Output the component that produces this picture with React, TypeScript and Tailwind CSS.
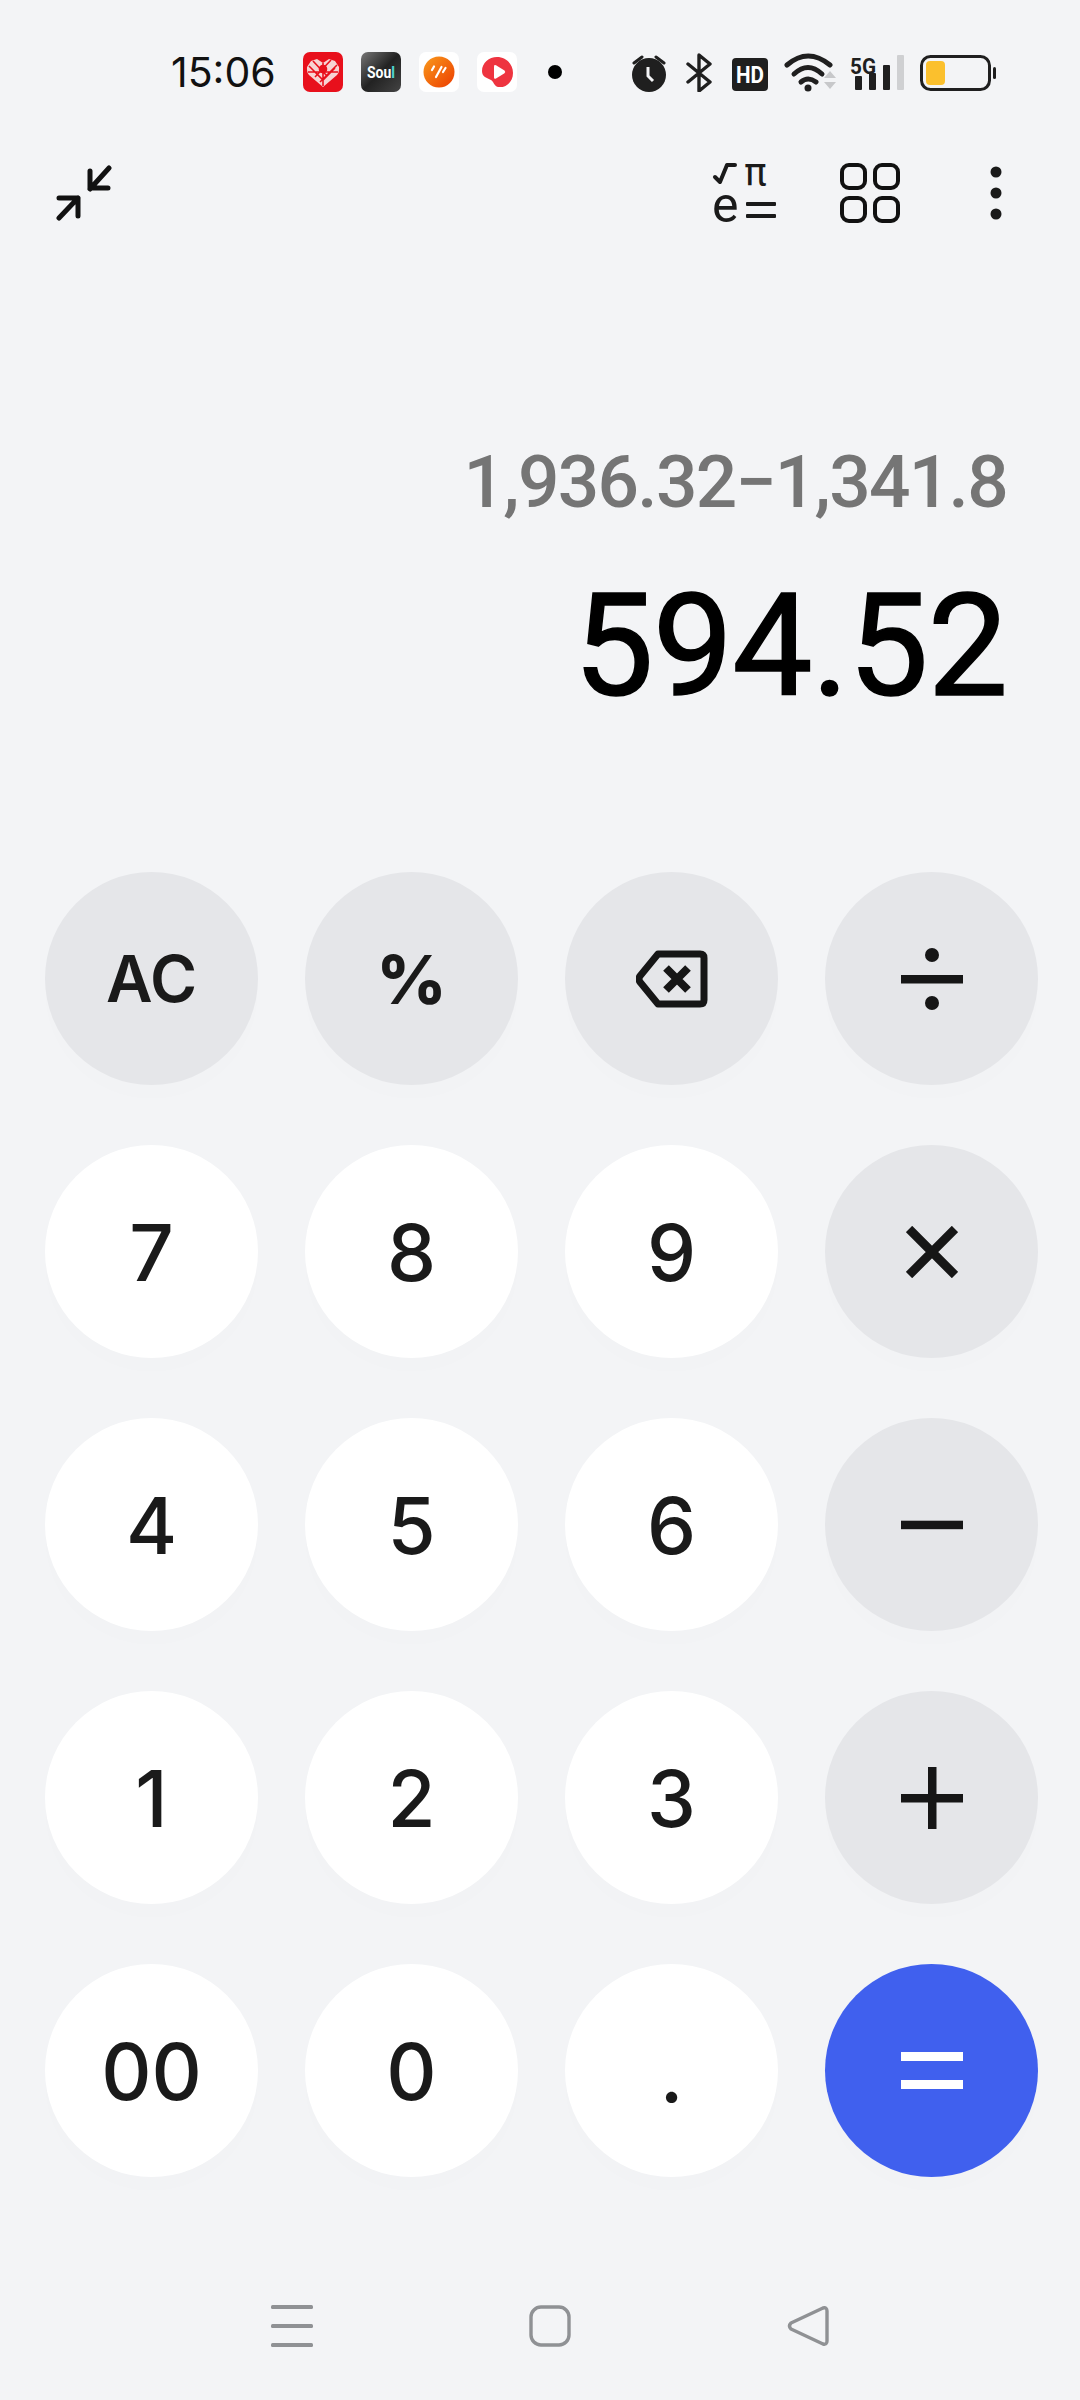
import React from "react";

const FONT = "[font-family:Roboto,'Noto_Sans',sans-serif]";

function Pinduoduo() {
  return (
    <svg width="40" height="40" viewBox="0 0 40 40">
      <rect width="40" height="40" rx="7" fill="#e8101c" />
      <path d="M20 35 L6 23 Q3.5 20 4 15 L8 9 L14 7 L20 11 L26 7 L32 9 L36 15 Q36.5 20 34 23 Z" fill="#f7d3d3" />
      <g stroke="#e8101c" strokeWidth="1.6" fill="none">
        <path d="M6 14 L20 28 L32 16 M10 9 L24 24 M34 13 L17 30 M28 8 L12 25 M5 20 H35 M20 11 V34" />
        <circle cx="20" cy="17" r="3.5" fill="#e8101c" />
      </g>
    </svg>
  );
}

function SoulIcon() {
  return (
    <svg width="40" height="40" viewBox="0 0 40 40">
      <defs>
        <linearGradient id="soulg" x1="0" y1="0" x2="1" y2="1">
          <stop offset="0" stopColor="#777" />
          <stop offset="0.5" stopColor="#222" />
          <stop offset="1" stopColor="#444" />
        </linearGradient>
        <linearGradient id="soult" x1="0" y1="0" x2="1" y2="0">
          <stop offset="0.84" stopColor="#fff" />
          <stop offset="0.84" stopColor="#4fd6cf" />
        </linearGradient>
      </defs>
      <rect width="40" height="40" rx="7" fill="url(#soulg)" />
      <text x="20" y="26" textAnchor="middle" fontFamily="Roboto, sans-serif" fontSize="16" fontWeight="700" fill="url(#soult)" textLength="28" lengthAdjust="spacingAndGlyphs">Soul</text>
    </svg>
  );
}

function OrangeIcon() {
  return (
    <svg width="40" height="40" viewBox="0 0 40 40">
      <defs>
        <linearGradient id="orgg" x1="0" y1="0" x2="1" y2="1">
          <stop offset="0" stopColor="#f99a1c" />
          <stop offset="1" stopColor="#ec3d00" />
        </linearGradient>
      </defs>
      <rect width="40" height="40" rx="7" fill="#fff" />
      <circle cx="20" cy="20" r="15.5" fill="url(#orgg)" />
      <path d="M13 18l2-3.5M17 25l5.5-10M24 20l2.5-4" stroke="#fff" strokeWidth="2.2" strokeLinecap="round" fill="none" />
    </svg>
  );
}

function RedPlayIcon() {
  return (
    <svg width="40" height="40" viewBox="0 0 40 40">
      <rect width="40" height="40" rx="7" fill="#fff" />
      <path d="M20 5 C29 5 36 12 36 21 C36 30 29 36 21 35 C17 34 17 30 14 28 C10 26 5 25 5 19 C5 11 12 5 20 5 Z" fill="#ee3440" />
      <path d="M17 14.5 Q17 12.5 19 13.3 L27.5 18.5 Q29 20 27.5 21.3 L19 26.5 Q17 27.3 17 25.5 Z" fill="#fff" />
    </svg>
  );
}

function StatusRight() {
  return (
    <svg width="364" height="40" viewBox="0 0 364 40" className="ml-[70px]">
      {/* alarm */}
      <circle cx="17" cy="23" r="17" fill="#1f1f1f" />
      <path d="M2 11l8-6M32 11l-8-6" stroke="#1f1f1f" strokeWidth="3" strokeLinecap="round" />
      <path d="M16 15v9l5 5" stroke="#f3f4f6" strokeWidth="3" fill="none" />
      {/* bluetooth */}
      <path d="M56 12l22 18-11 9V3l11 9-22 18" stroke="#1f1f1f" strokeWidth="3.4" fill="none" strokeLinejoin="round" strokeLinecap="round" />
      {/* HD */}
      <rect x="100" y="6" width="36" height="33" rx="4" fill="#1f1f1f" />
      <text x="118" y="31" textAnchor="middle" fontFamily="Roboto, sans-serif" fontSize="23" fontWeight="700" fill="#fff" textLength="28" lengthAdjust="spacingAndGlyphs">HD</text>
      {/* wifi */}
      <g fill="none" stroke="#1f1f1f" strokeWidth="5" strokeLinecap="round">
        <path d="M155 13 Q176 -5 198 13" />
        <path d="M162 22 Q176 9 190 22" />
        <path d="M169 30 Q176 24 184 30" />
      </g>
      <circle cx="176" cy="36" r="3.5" fill="#1f1f1f" />
      <path d="M192 26l6-7 6 7zM192 30l6 7 6-7z" fill="#c7c8ca" />
      {/* 5G */}
      <text x="218" y="22" fontFamily="Roboto, sans-serif" fontSize="22" fontWeight="700" fill="#1f1f1f" textLength="26" lengthAdjust="spacingAndGlyphs">5G</text>
      <rect x="223" y="24" width="7" height="14" rx="1" fill="#1f1f1f" />
      <rect x="237" y="21" width="7" height="17" rx="1" fill="#1f1f1f" />
      <rect x="251" y="13" width="7" height="25" rx="1" fill="#1f1f1f" />
      <rect x="265" y="3" width="7" height="35" rx="1" fill="#cfd0d2" />
      {/* battery */}
      <rect x="289.5" y="4.5" width="68" height="33" rx="9" fill="none" stroke="#1f1f1f" strokeWidth="3" />
      <rect x="294" y="9" width="19" height="24" rx="4" fill="#fbc02d" />
      <rect x="361" y="15" width="3" height="12" rx="1.5" fill="#1f1f1f" />
    </svg>
  );
}

function StatusBar() {
  return (
    <div className="flex h-[144px] items-center pl-[171px]">
      <div className="flex h-[50px] w-[132px] items-center font-['Inter',sans-serif] text-[41px] leading-none text-[#111]">15:06</div>
      <div className="flex gap-[18px]">
        <Pinduoduo />
        <SoulIcon />
        <OrangeIcon />
        <RedPlayIcon />
      </div>
      <div className="ml-[31px] h-[14px] w-[14px] rounded-full bg-black" />
      <StatusRight />
    </div>
  );
}

function Toolbar() {
  return (
    <div className="flex h-[98px] items-center pl-[56px]">
      <svg width="56" height="56" viewBox="0 0 56 56">
        <g fill="none" stroke="#111" strokeWidth="5" strokeLinecap="round" strokeLinejoin="round">
          <path d="M53 3 L34 24 M34 6 V23 H52" />
          <path d="M3 53 L22 33 M3 33 H22 V51" />
        </g>
      </svg>
      <svg width="78" height="94" viewBox="-5 -15 78 94" className="ml-[595px] -my-[15px]">
        <path d="M3 16 L8 21 L15 4 H23" fill="none" stroke="#1a1a1a" strokeWidth="4" strokeLinejoin="round" strokeLinecap="round" />
        <text x="32" y="24" fontFamily="'DejaVu Sans', sans-serif" fontSize="38" fill="#1a1a1a">π</text>
        <text x="0" y="61" fontFamily="Roboto, sans-serif" fontSize="50" fill="#1a1a1a">e</text>
        <rect x="34" y="41" width="30" height="4" rx="1" fill="#1a1a1a" />
        <rect x="34" y="53" width="30" height="4" rx="1" fill="#1a1a1a" />
      </svg>
      <svg width="60" height="60" viewBox="0 0 60 60" className="ml-[55px]">
        <g fill="none" stroke="#111" strokeWidth="4">
          <rect x="2" y="2" width="23" height="23" rx="7" />
          <rect x="35" y="2" width="23" height="23" rx="7" />
          <rect x="2" y="35" width="23" height="23" rx="7" />
          <rect x="35" y="35" width="23" height="23" rx="7" />
        </g>
      </svg>
      <svg width="12" height="54" viewBox="0 0 12 54" className="ml-[90px]">
        <circle cx="6" cy="6" r="5.5" fill="#1a1a1a" />
        <circle cx="6" cy="27" r="5.5" fill="#1a1a1a" />
        <circle cx="6" cy="48" r="5.5" fill="#1a1a1a" />
      </svg>
    </div>
  );
}

function Display() {
  return (
    <div className={`${FONT} flex h-[630px] flex-col items-end pr-[73px]`}>
      <div className="mt-[190px] text-[73px] font-medium leading-[100px] tracking-[-1.7px] text-[#757575]">1,936.32−1,341.8</div>
      <div className="mt-[34px] text-[143px] font-normal leading-[160px] tracking-[-1px] text-black [-webkit-text-stroke:1.5px_black]">594.52</div>
    </div>
  );
}

function Backspace() {
  return (
    <svg width="72" height="58" viewBox="0 0 72 58">
      <path d="M22 4 H64 Q68 4 68 8 V50 Q68 54 64 54 H22 L4 32 Q2 29 4 26 Z" fill="none" stroke="#161616" strokeWidth="7" strokeLinejoin="round" />
      <path d="M30 18 L52 40 M52 18 L30 40" stroke="#161616" strokeWidth="8" />
    </svg>
  );
}

function Divide() {
  return (
    <svg width="62" height="62" viewBox="0 0 62 62">
      <rect x="0" y="27" width="62" height="8.5" fill="#161616" />
      <circle cx="31" cy="7" r="7" fill="#161616" />
      <circle cx="31" cy="55" r="7" fill="#161616" />
    </svg>
  );
}

function Times() {
  return (
    <svg width="52" height="52" viewBox="0 0 52 52">
      <path d="M3 3 L49 49 M49 3 L3 49" stroke="#161616" strokeWidth="9" />
    </svg>
  );
}

function Minus() {
  return (
    <svg width="62" height="10" viewBox="0 0 62 10">
      <rect width="62" height="8.5" y="0.7" fill="#161616" />
    </svg>
  );
}

function Plus() {
  return (
    <svg width="62" height="62" viewBox="0 0 62 62">
      <rect x="0" y="27" width="62" height="8.5" fill="#161616" />
      <rect x="27" y="0" width="8.5" height="62" fill="#161616" />
    </svg>
  );
}

function EqualsIcon() {
  return (
    <svg width="62" height="38" viewBox="0 0 62 38">
      <rect width="62" height="9" y="0" fill="#fff" />
      <rect width="62" height="9" y="28" fill="#fff" />
    </svg>
  );
}

type Kind = "num" | "op" | "eq";

function Key({ kind, children }: { kind: Kind; children: React.ReactNode }) {
  const bg = kind === "num" ? "bg-white" : kind === "op" ? "bg-[#e5e6e9]" : "bg-[#4060ee]";
  return (
    <button className={`${bg} flex h-[213px] w-[213px] items-center justify-center rounded-full text-[#1a1a1a] shadow-[0_14px_24px_rgba(0,0,0,0.006)]`}>
      {children}
    </button>
  );
}

function Keypad() {
  const digit = "pt-[3px] text-[78px] leading-none font-[550] font-['Inter',sans-serif]";
  const label = "text-[64px] leading-none font-semibold font-['Inter',sans-serif]";
  const pct = "text-[68px] leading-none font-extrabold font-['Inter',sans-serif]";
  return (
    <div className="grid grid-cols-[repeat(4,213px)] gap-x-[47px] gap-y-[60px] pl-[45px]">
      <Key kind="op"><span className={label}>AC</span></Key>
      <Key kind="op"><span className={pct}>%</span></Key>
      <Key kind="op"><Backspace /></Key>
      <Key kind="op"><Divide /></Key>

      <Key kind="num"><span className={digit}>7</span></Key>
      <Key kind="num"><span className={digit}>8</span></Key>
      <Key kind="num"><span className={digit}>9</span></Key>
      <Key kind="op"><Times /></Key>

      <Key kind="num"><span className={digit}>4</span></Key>
      <Key kind="num"><span className={digit}>5</span></Key>
      <Key kind="num"><span className={digit}>6</span></Key>
      <Key kind="op"><Minus /></Key>

      <Key kind="num"><span className={digit}>1</span></Key>
      <Key kind="num"><span className={digit}>2</span></Key>
      <Key kind="num"><span className={digit}>3</span></Key>
      <Key kind="op"><Plus /></Key>

      <Key kind="num"><span className={digit}>00</span></Key>
      <Key kind="num"><span className={digit}>0</span></Key>
      <Key kind="num"><span className="pt-[6px] text-[78px] leading-none font-[550] font-['Inter',sans-serif]">.</span></Key>
      <Key kind="eq"><EqualsIcon /></Key>
    </div>
  );
}

function NavBar() {
  return (
    <div className="mt-[128px] flex pl-[163px]">
      <div className="flex w-[258px] justify-center">
        <svg width="42" height="42" viewBox="0 0 42 42">
          <g fill="#8f9194">
            <rect x="0" y="0" width="42" height="4" rx="1.5" />
            <rect x="0" y="19" width="42" height="4" rx="1.5" />
            <rect x="0" y="38" width="42" height="4" rx="1.5" />
          </g>
        </svg>
      </div>
      <div className="flex w-[258px] justify-center">
        <svg width="42" height="42" viewBox="0 0 42 42">
          <rect x="2" y="2" width="38" height="38" rx="10" fill="none" stroke="#8f9194" strokeWidth="3.4" />
        </svg>
      </div>
      <div className="flex w-[258px] justify-center">
        <svg width="42" height="42" viewBox="0 0 42 42">
          <path d="M36 3 Q40 2 40 6 V36 Q40 40 36 39 L4 24 Q1 21 4 18 Z" fill="none" stroke="#8f9194" strokeWidth="3.4" strokeLinejoin="round" />
        </svg>
      </div>
    </div>
  );
}

export default function App() {
  return (
    <div className="flex h-[2400px] w-[1080px] flex-col overflow-hidden bg-[#f3f4f6]">
      <StatusBar />
      <Toolbar />
      <Display />
      <Keypad />
      <NavBar />
    </div>
  );
}
